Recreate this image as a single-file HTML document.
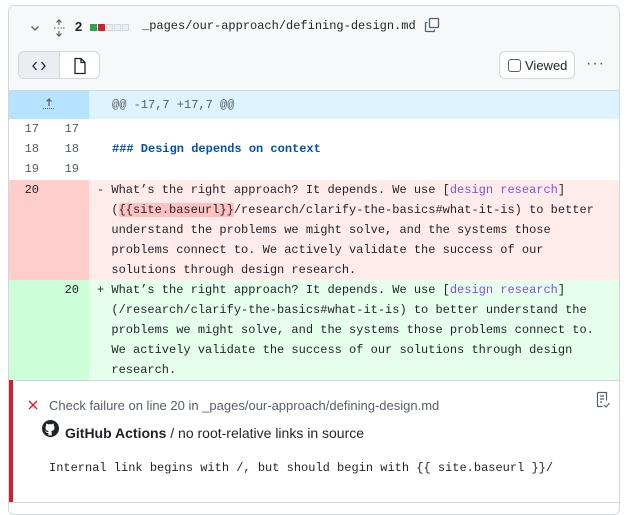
<!DOCTYPE html>
<html><head><style>
*{box-sizing:border-box;margin:0;padding:0}
body{width:627px;height:504px;background:#fff;font-family:"Liberation Sans",sans-serif;position:relative;overflow:hidden}
.box{position:absolute;left:8px;top:5px;width:612px;height:510px;border:1px solid #d0d7de;border-radius:6px;overflow:hidden}
.hdr{position:absolute;left:0;top:0;width:100%;height:85px;background:#f6f8fa;border-bottom:1px solid #d0d7de}
.mono{font-family:"Liberation Mono",monospace;font-size:12px}
.abs{position:absolute}
.row{position:absolute;left:0;width:100%;height:20px;line-height:20px}
.num{position:absolute;width:30px;text-align:right;color:#57606a;font-family:"Liberation Mono",monospace;font-size:12px}
.code{position:absolute;left:103px;font-family:"Liberation Mono",monospace;font-size:12px;color:#1f2328;white-space:pre;line-height:20px}
.lk{color:#8250df}
</style></head><body>
<div class="box">
 <div class="hdr">
  <svg class="abs" style="left:20px;top:16px" width="12" height="12" viewBox="0 0 12 12"><path d="M2.5 4.5L6 8l3.5-3.5" stroke="#57606a" stroke-width="1.3" fill="none"/></svg>
  <svg class="abs" style="left:44px;top:13px" width="12" height="18" viewBox="0 0 12 18"><path d="M6 1v5M3.5 3.5L6 1l2.5 2.5M6 12v5M3.5 14.5L6 17l2.5-2.5" stroke="#57606a" stroke-width="1.2" fill="none"/><path d="M1 9h1.5M4.5 9h1.5M7.5 9h1.5M10 9h1.5" stroke="#57606a" stroke-width="1"/></svg>
  <div class="abs" style="left:66px;top:13px;font-size:13px;font-weight:bold;color:#1f2328">2</div>
  <div class="abs" style="left:81px;top:18px;display:flex;gap:1px">
   <span style="width:7px;height:7px;background:#2da44e"></span><span style="width:7px;height:7px;background:#cf222e"></span><span style="width:7px;height:7px;background:#eaeef2;border:1px solid #d0d7de"></span><span style="width:7px;height:7px;background:#eaeef2;border:1px solid #d0d7de"></span><span style="width:7px;height:7px;background:#eaeef2;border:1px solid #d0d7de"></span>
  </div>
  <div class="abs mono" style="left:133px;top:13px;color:#1f2328">_pages/our-approach/defining-design.md</div>
  <svg class="abs" style="left:415px;top:11px" width="16" height="16" viewBox="0 0 16 16"><rect x="5.5" y="1.5" width="9" height="9" rx="1" stroke="#57606a" fill="none" stroke-width="1.3"/><path d="M3.5 5.5h-1a1 1 0 0 0-1 1v7a1 1 0 0 0 1 1h7a1 1 0 0 0 1-1v-1" stroke="#57606a" fill="none" stroke-width="1.3"/></svg>
  <div class="abs" style="left:9px;top:45px;width:82px;height:28px;border:1px solid #d0d7de;border-radius:6px;background:#fff;overflow:hidden">
   <div class="abs" style="left:0;top:0;width:41px;height:28px;background:#eaeef2;border-right:1px solid #d0d7de"></div>
   <svg class="abs" style="left:12px;top:6px" width="16" height="16" viewBox="0 0 16 16"><path d="M5.5 4L2 8l3.5 4M10.5 4L14 8l-3.5 4" stroke="#1f2328" stroke-width="1.3" fill="none"/></svg>
   <svg class="abs" style="left:53px;top:5px" width="16" height="18" viewBox="0 0 16 18"><path d="M3 1.5h6l4 4v11H3z M9 1.5v4h4" stroke="#1f2328" stroke-width="1.3" fill="none"/></svg>
  </div>
  <div class="abs" style="left:490px;top:45px;width:76px;height:28px;border:1px solid #d0d7de;border-radius:6px;background:#fff">
   <span class="abs" style="left:8px;top:7px;width:13px;height:13px;border:1px solid #57606a;border-radius:3px"></span>
   <span class="abs" style="left:25px;top:6px;font-size:13px;color:#1f2328">Viewed</span>
  </div>
  <div class="abs" style="left:577px;top:49px;font-size:16px;color:#57606a;letter-spacing:1px">···</div>
 </div>
 <div class="abs" style="left:0;top:85px;width:100%;height:28px;background:#ddf4ff"></div>
 <div class="abs" style="left:0;top:85px;width:80px;height:28px;background:#b6e3ff"></div>
 <svg class="abs" style="left:33px;top:91px" width="14" height="14" viewBox="0 0 14 14"><path d="M7 2v7M4.5 4.5L7 2l2.5 2.5" stroke="#57606a" stroke-width="1.2" fill="none"/><path d="M1 11.5h12" stroke="#57606a" stroke-width="1" stroke-dasharray="1 1"/></svg>
 <div class="code" style="top:89px;color:#57606a">@@ -17,7 +17,7 @@</div>

 <div class="row" style="top:113px"><span class="num" style="left:0">17</span><span class="num" style="left:40px">17</span></div>
 <div class="row" style="top:133px"><span class="num" style="left:0">18</span><span class="num" style="left:40px">18</span><span class="code" style="color:#0550ae;font-weight:bold">### Design depends on context</span></div>
 <div class="row" style="top:153px"><span class="num" style="left:0">19</span><span class="num" style="left:40px">19</span></div>

 <div class="abs" style="left:0;top:174px;width:100%;height:100px;background:#ffebe9"></div>
 <div class="abs" style="left:0;top:174px;width:80px;height:100px;background:#ffcecb"></div>
 <span class="num" style="left:0;top:174px;line-height:20px;color:#1f2328">20</span>
 <div class="code" style="left:88px;top:174px">- What’s the right approach? It depends. We use [<span class="lk">design research</span>]
  (<span style="background:rgba(255,129,130,.4);border-radius:2px">{{site.baseurl}}</span>/research/clarify-the-basics#what-it-is) to better
  understand the problems we might solve, and the systems those
  problems connect to. We actively validate the success of our
  solutions through design research.</div>

 <div class="abs" style="left:0;top:274px;width:100%;height:100px;background:#e6ffec"></div>
 <div class="abs" style="left:0;top:274px;width:80px;height:100px;background:#ccffd8"></div>
 <span class="num" style="left:40px;top:274px;line-height:20px;color:#1f2328">20</span>
 <div class="code" style="left:88px;top:274px">+ What’s the right approach? It depends. We use [<span class="lk">design research</span>]
  (/research/clarify-the-basics#what-it-is) to better understand the
  problems we might solve, and the systems those problems connect to.
  We actively validate the success of our solutions through design
  research.</div>

 <div class="abs" style="left:0;top:374px;width:100%;height:123px;border-top:1px solid #d0d7de;border-bottom:1px solid #d0d7de"></div>
 <div class="abs" style="left:0;top:374px;width:4px;height:122px;background:#cf222e"></div>
 <svg class="abs" style="left:18px;top:393px" width="12" height="12" viewBox="0 0 12 12"><path d="M2 2l8 8M10 2l-8 8" stroke="#cf222e" stroke-width="1.4"/></svg>
 <div class="abs" style="left:40px;top:392px;font-size:13px;color:#57606a">Check failure on line 20 in _pages/our-approach/defining-design.md</div>
 <svg class="abs" style="left:586px;top:385px" width="16" height="18" viewBox="0 0 16 18"><path d="M2.5 1.5h9v8M2.5 1.5v14h5M5 5h4M5 8h4M5 11h2M9 14l2 2 3.5-4" stroke="#57606a" stroke-width="1.2" fill="none"/></svg>
 <svg class="abs" style="left:33px;top:414px" width="17" height="17" viewBox="0 0 16 16"><circle cx="8" cy="8" r="8" fill="#1f2328"/><path d="M6 14.5v-2.3c-1.8.4-2.3-.9-2.3-.9-.3-.7-.7-.9-.7-.9-.6-.4 0-.4 0-.4.7 0 1 .7 1 .7.6 1 1.5.7 1.9.5.1-.4.2-.7.4-.9-1.5-.2-3-.7-3-3.3 0-.7.3-1.3.7-1.8-.1-.2-.3-.9.1-1.8 0 0 .6-.2 1.8.7a6 6 0 0 1 3.2 0c1.2-.9 1.8-.7 1.8-.7.4.9.1 1.6.1 1.8.4.5.7 1.1.7 1.8 0 2.6-1.5 3.1-3 3.3.2.2.4.6.4 1.2v3z" fill="#fff"/></svg>
 <div class="abs" style="left:56px;top:419px;font-size:14px;color:#1f2328"><b>GitHub Actions</b> / no root-relative links in source</div>
 <div class="abs mono" style="left:40px;top:455px;color:#1f2328">Internal link begins with /, but should begin with {{ site.baseurl }}/</div>
</div>
</body></html>
